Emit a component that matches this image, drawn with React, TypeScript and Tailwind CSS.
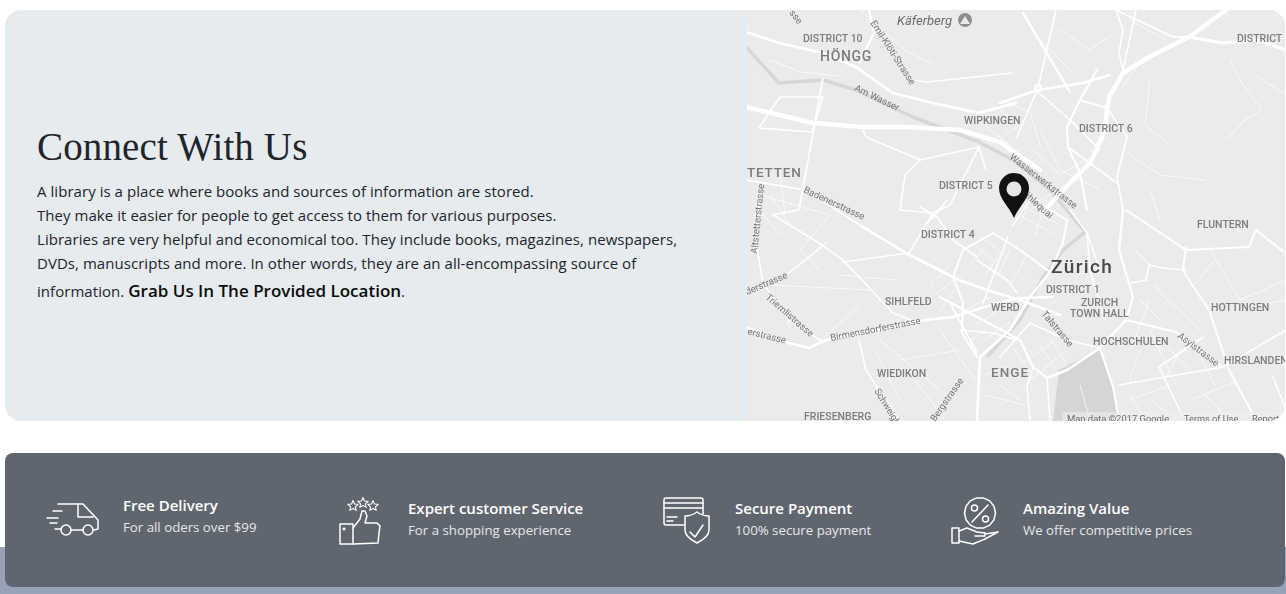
const ROADS_WIDE: [string, number][] = [
  ["M746 107 L813 123 L863 127 L906 127 L960 130 L1000 142 L1040 170", 4.5],
  ["M1226 10 L1189 37 L1149 57 L1123 73 L1109 97 L1104 133 L1090 163 L1063 190 L1045 210", 4.5],
  ["M1189 37 L1223 43 L1256 40 L1286 50", 3],
  ["M746 32 L779 43 L823 53 L856 67 L893 93 L933 103 L979 113 L1016 103", 2.6],
  ["M1000 103 L1038 90 L1083 83 L1110 75", 2.6],
  ["M869 10 L874 33 L859 63", 2.2],
  ["M863 227 L906 253 L959 280 L987 290 L1020 300 L1060 315", 2.6],
  ["M746 327 L789 343 L809 348 L826 340 L926 320 L953 317 L997 303 L1020 298 L1053 297", 2.4],
  ["M1023 13 L1049 57 L1070 92", 2.4],
  ["M1186 247 L1183 270 L1189 280 L1209 310 L1229 370 L1249 407 L1256 420", 2],
  ["M1126 210 L1186 250 L1249 247 L1256 230 L1285 253", 2],
  ["M1123 210 L1119 250 L1133 297 L1126 320 L1100 348", 2.2],
  ["M1126 320 L1176 332 L1223 367 L1286 330", 1.8],
  ["M1100 348 L1113 387 L1119 420", 2],
  ["M1047 378 L1067 370 L1100 348", 2.6],
  ["M1050 272 L1030 297 L1010 330 L980 357 L977 420", 2.6],
  ["M993 233 L963 250 L953 277 L963 303 L962 333 L977 357", 2],
  ["M993 233 L1020 250 L1050 272 L1063 243 L1067 220 L1045 207", 2],
  ["M940 297 L1020 340 L1033 367 L1047 378", 2.2],
  ["M1097 70 L1080 100 L1067 127 L1068 147 L1080 173 L1087 210", 2.2],
  ["M1080 100 L1107 108", 2],
];
const ROADS_MID: string[] = [
  "M913 80 L926 82 L946 80 L1012 73",
  "M823 78 L799 210 L773 215 L819 243 L843 260 L893 313 L919 323",
  "M780 97 L823 97 L812 132 L759 128 L780 97",
  "M863 130 L866 137 L920 160 L979 147 L986 170",
  "M920 160 L905 175 L900 210 L933 213",
  "M979 147 L950 205 L933 213 L909 253",
  "M843 262 L909 253",
  "M1056 10 L1038 88 L1017 137",
  "M1038 92 L1070 120 L1100 150",
  "M1116 10 L1123 30 L1119 53 L1123 70",
  "M1136 10 L1129 43 L1123 70",
  "M1116 10 L1173 37 L1189 37",
  "M1107 108 L1127 137 L1117 177 L1123 210",
  "M1068 147 L1117 183",
  "M756 243 L763 283 L789 320 L823 342",
  "M826 243 L789 273",
  "M859 340 L866 370 L879 390 L899 420",
  "M1131 283 L1146 280 L1149 265 L1163 268 L1186 270",
  "M1159 367 L1203 337",
  "M1159 367 L1183 417",
  "M1119 385 L1223 367",
  "M1273 377 L1286 410",
  "M746 180 L805 190 L863 227",
  "M760 195 L756 243",
  "M1008 237 L983 303",
  "M977 260 L1007 280 L1017 293",
  "M1033 367 L1027 387 L1030 420",
  "M1047 378 L1050 420",
  "M1000 357 L1030 323 L1067 340 L1100 348",
  "M920 207 L937 217 L953 240 L977 257",
  "M935 215 L920 230",
  "M935 215 L947 200",
  "M1013 225 L1030 200",
  "M960 330 L993 333 L1017 340",
  "M950 303 L977 353",
  "M1070 210 L1087 233 L1090 270 L1105 320",
  "M1087 233 L1100 270",
];
const STREETS: string[] = [
  "M860 10 L905 50 L935 65", "M770 60 L800 72 L840 76", "M1001 100 L1030 112 L1040 145",
  "M1060 30 L1090 50 L1110 36", "M1040 40 L1070 70", "M1130 20 L1165 40", "M1142 60 L1120 90",
  "M1150 78 L1145 125 L1170 145", "M1230 60 L1240 80 L1262 110 L1245 120 L1225 140",
  "M1255 75 L1286 95", "M1033 150 L1060 175 L1085 160", "M1040 130 L1060 170 L1100 190",
  "M1130 155 L1160 175 L1205 180", "M1150 190 L1160 220", "M1040 200 L1086 175",
  "M780 170 L785 215", "M760 195 L830 215", "M830 215 L800 250 L820 270", "M840 275 L895 280",
  "M770 285 L870 290", "M860 305 L815 345", "M780 300 L790 330", "M880 340 L940 390",
  "M900 360 L960 350", "M875 350 L900 400", "M915 380 L945 420", "M940 330 L975 380",
  "M1150 300 L1130 350", "M1170 300 L1200 330", "M1160 340 L1190 370", "M1210 250 L1240 300 L1286 280",
  "M1240 310 L1286 300", "M1190 400 L1240 380", "M1130 400 L1170 385", "M1150 330 L1176 385",
  "M1190 290 L1215 260", "M1020 365 L1055 340", "M1030 380 L1065 352", "M1040 345 L1055 368",
  "M1052 340 L1065 362", "M1015 350 L1030 372", "M975 245 L995 262", "M985 240 L1005 255",
  "M970 265 L983 250", "M985 275 L1000 255", "M1025 258 L1010 285", "M1010 250 L998 275",
  "M935 295 L960 275", "M940 310 L955 290", "M930 285 L950 265", "M965 310 L990 297",
  "M975 325 L1000 310", "M985 340 L1010 322", "M965 345 L985 330", "M1000 385 L1020 400",
  "M985 395 L1025 405", "M985 375 L1010 365", "M1020 205 L1060 225", "M1020 215 L1055 235",
  "M1030 200 L1020 225", "M1045 205 L1035 235",
  "M1000 110 L1020 125 L1005 135", "M985 125 L1010 145", "M770 195 L790 225", "M755 205 L780 235",
  "M1140 350 L1130 380", "M1180 350 L1165 380", "M1200 355 L1215 385", "M1135 335 L1165 350",
  "M1080 385 L1090 420", "M1130 395 L1145 420", "M1150 400 L1170 415", "M1205 395 L1225 415",
  "M1135 250 L1150 265", "M1155 285 L1175 310", "M1140 300 L1160 320",
];

const MapLabel = ({ x, y, t, s = 10.5, c = "#7c7c7c", r = 0, w = 500, ls = 0, i = false }: { x: number; y: number; t: string; s?: number; c?: string; r?: number; w?: number; ls?: number; i?: boolean }) => (
  <text
    x={x}
    y={y}
    fontSize={s}
    fill={c}
    fontWeight={w}
    letterSpacing={ls}
    fontStyle={i ? "italic" : "normal"}
    transform={r ? `rotate(${r} ${x} ${y})` : undefined}
  >
    {t}
  </text>
);

function ZurichMap() {
  return (
    <svg viewBox="747 10 538 411" className="block h-full w-full font-['Roboto',sans-serif]">
      <rect x="747" y="10" width="538" height="411" fill="#ebebec" />
      <g className="blur-[0.45px]">
        <path d="M1053 421 L1059 370 L1099 350 L1113 387 L1119 421 Z" fill="#d6d5d6" />
        <path d="M746 47 L779 83 L823 80 L856 90 L913 117 L979 142 L1013 160 L1050 190 L1085 232 L1063 250 L1043 277 L1020 320 L987 357" fill="none" stroke="#d8d7d7" strokeWidth="3.5" strokeLinejoin="round" />
        <g fill="none" stroke="#ffffff" strokeLinejoin="round" strokeLinecap="round">
          <g strokeWidth="0.9" opacity="0.8">
            {STREETS.map((d) => (
              <path key={d} d={d} />
            ))}
          </g>
          <g strokeWidth="1.6">
            {ROADS_MID.map((d) => (
              <path key={d} d={d} />
            ))}
          </g>
          {ROADS_WIDE.map(([d, w]) => (
            <path key={d} d={d} strokeWidth={w} />
          ))}
          <circle cx="1038" cy="88" r="3" strokeWidth="2" />
        </g>
        <MapLabel x={897} y={25} t="Käferberg" s={13} c="#6c6c6c" w={400} i />
        <circle cx="965" cy="20" r="7" fill="#8d8d8d" />
        <path d="M960 24 L965 16 L970 24 Z" fill="#e9e9ea" />
        <MapLabel x={803} y={42} t="DISTRICT 10" />
        <MapLabel x={820} y={61} t="HÖNGG" s={14} ls={0.7} />
        <MapLabel x={870} y={23} t="Emil-Klöti-Strasse" s={9.5} c="#757575" r={57} w={400} />
        <MapLabel x={789} y={13} t="sse" s={9.5} c="#757575" r={52} w={400} />
        <MapLabel x={854} y={90} t="Am Wasser" s={9.5} c="#757575" r={26} w={400} />
        <MapLabel x={964} y={124} t="WIPKINGEN" />
        <MapLabel x={1079} y={132} t="DISTRICT 6" />
        <MapLabel x={1237} y={42} t="DISTRICT" />
        <MapLabel x={747} y={177} t="TETTEN" s={13.5} ls={0.8} />
        <MapLabel x={803} y={192} t="Badenerstrasse" s={9.5} c="#757575" r={25} w={400} />
        <MapLabel x={939} y={189} t="DISTRICT 5" />
        <MapLabel x={1009} y={158} t="Wasserwerkstrasse" s={9.5} c="#757575" r={38} w={400} />
        <MapLabel x={1004} y={178} t="Neumühlequai" s={9.5} c="#757575" r={42} w={400} />
        <MapLabel x={921} y={238} t="DISTRICT 4" />
        <MapLabel x={1197} y={228} t="FLUNTERN" />
        <MapLabel x={1051} y={273} t="Zürich" s={19} c="#484848" ls={1.4} />
        <MapLabel x={1046} y={293} t="DISTRICT 1" />
        <MapLabel x={1081} y={306} t="ZURICH" />
        <MapLabel x={1070} y={317} t="TOWN HALL" />
        <MapLabel x={885} y={305} t="SIHLFELD" />
        <MapLabel x={991} y={311} t="WERD" />
        <MapLabel x={1211} y={311} t="HOTTINGEN" />
        <MapLabel x={1041} y={314} t="Talstrasse" s={9.5} c="#757575" r={50} w={400} />
        <MapLabel x={1093} y={345} t="HOCHSCHULEN" />
        <MapLabel x={1177} y={337} t="Asylstrasse" s={9.5} c="#757575" r={37} w={400} />
        <MapLabel x={1224} y={364} t="HIRSLANDEN" />
        <MapLabel x={877} y={377} t="WIEDIKON" />
        <MapLabel x={991} y={377} t="ENGE" s={13.5} ls={1} />
        <MapLabel x={804} y={420} t="FRIESENBERG" />
        <MapLabel x={874} y={391} t="Schweighof" s={9.5} c="#757575" r={58} w={400} />
        <MapLabel x={935} y={422} t="Bergstrasse" s={9.5} c="#757575" r={-55} w={400} />
        <MapLabel x={831} y={341} t="Birmensdorferstrasse" s={9.5} c="#757575" r={-11} w={400} />
        <MapLabel x={765} y={298} t="Triemlistrasse" s={9.5} c="#757575" r={41} w={400} />
        <MapLabel x={747} y={334} t="erstrasse" s={9.5} c="#757575" r={14} w={400} />
        <MapLabel x={747} y={295} t="derstrasse" s={9.5} c="#757575" r={-23} w={400} />
        <MapLabel x={757} y={254} t="Altstetterstrasse" s={9.5} c="#757575" r={-84} w={400} />
        <rect x="1062" y="412" width="223" height="9" fill="#efefef" opacity="0.6" />
        <MapLabel x={1067} y={421.5} t="Map data ©2017 Google" s={9.4} c="#6a6a6a" w={400} />
        <MapLabel x={1184} y={421.5} t="Terms of Use" s={9.2} c="#6a6a6a" w={400} />
        <MapLabel x={1252} y={421.5} t="Report" s={9.2} c="#6a6a6a" w={400} />
      </g>
      <path
        d="M1014 218 C1009 206 999 199 999 188 A15 15 0 0 1 1029 188 C1029 199 1019 206 1014 218 Z"
        fill="#111214"
      />
      <circle cx="1014" cy="189" r="7.5" fill="#e6e6e6" />
    </svg>
  );
}

const star = (cx: number, cy: number, r: number) => {
  const p: string[] = [];
  for (let i = 0; i < 10; i++) {
    const a = -Math.PI / 2 + (i * Math.PI) / 5;
    const q = i % 2 ? r * 0.45 : r;
    p.push(`${(cx + q * Math.cos(a)).toFixed(1)},${(cy + q * Math.sin(a)).toFixed(1)}`);
  }
  return p.join(" ");
};

const scallop = (cx: number, cy: number, r: number, n: number) => {
  const p: string[] = [];
  for (let i = 0; i < n; i++) {
    const a = (i * 2 * Math.PI) / n;
    p.push(`${(cx + r * Math.cos(a)).toFixed(1)},${(cy + r * Math.sin(a)).toFixed(1)}`);
  }
  return p.join(" ");
};

const iconProps = { fill: "none", stroke: "#ffffff", strokeWidth: 1.5, strokeLinecap: "round", strokeLinejoin: "round" } as const;

const TruckIcon = () => (
  <svg viewBox="46 500 54 40" className="mt-1 h-10 w-[54px] shrink-0 self-start" {...iconProps}>
    <path d="M58 504 H83 L98 520 V529 L94 530" />
    <path d="M78 504 V517 H93" />
    <circle cx="66" cy="530" r="5" />
    <circle cx="88" cy="530" r="5" />
    <path d="M71 530 H83 M53 511 H62 M47 518 H58 M50 523 H57 M55 529 H61" />
  </svg>
);

const ThumbIcon = () => (
  <svg viewBox="339 495 43 50" className="h-[50px] w-[43px] shrink-0" {...iconProps}>
    <rect x="340" y="523" width="13" height="20" />
    <circle cx="344" cy="528" r="0.7" />
    <path d="M353 527 L360 518 L362 510 L365 510 L367 515 L365 522 L377 522 L380 525 L379 532 L378 542 L353 543" />
    <g strokeWidth={1.1}>
      <polygon points={star(353, 505, 5.5)} />
      <polygon points={star(363, 502, 5.5)} />
      <polygon points={star(373, 505, 5.5)} />
    </g>
  </svg>
);

const CardIcon = () => (
  <svg viewBox="663 497 49 48" className="h-12 w-[49px] shrink-0" {...iconProps}>
    <path d="M684 525 H666 A2 2 0 0 1 664 523 V500 A2 2 0 0 1 666 498 H701 A2 2 0 0 1 703 500 V514" />
    <path d="M664 503 H703 M664 508 H703 M667 517 H677 M667 521 H673" />
    <path d="M697 512 C693 515 689 516 685 516 V530 C685 536 691 540 697 543 C703 540 709 536 709 530 V516 C705 516 701 515 697 512 Z" />
    <path d="M690 532 L695 537 L703 525" />
  </svg>
);

const PercentIcon = () => (
  <svg viewBox="951 495 50 50" className="h-[50px] w-[50px] shrink-0" {...iconProps}>
    <polygon points={scallop(980, 512, 15.5, 14)} />
    <circle cx="974.5" cy="507" r="3" />
    <circle cx="985.5" cy="518" r="3" />
    <path d="M988 504 L972 521" />
    <rect x="952" y="527" width="7" height="15" />
    <path d="M959 530 L967 527 L977 531 L985 532 L985 535 L975 535 M985 533 L998 531 L985 538 L973 543 L959 540" />
  </svg>
);

const FEATURE_CLASS = "flex h-[50px] items-center text-[#e6e8ea]";
const TITLE_CLASS = "text-[15px] font-semibold leading-5 text-white";
const SUB_CLASS = "mt-[2px] text-[13.25px] leading-[21px]";

export default function App() {
  return (
    <div className="flex h-[594px] w-[1286px] flex-col overflow-hidden bg-white font-['Open_Sans','Noto_Sans',sans-serif]">
      <section className="mx-[5px] mt-2.5 flex h-[411px] w-[1280px] shrink-0 overflow-hidden rounded-2xl bg-[#e6ebef]">
        <div className="w-[742px] shrink-0 pl-8 pr-[50px] pt-[114px]">
          <h1 className="font-['Liberation_Serif',serif] text-[39px] leading-[46px] tracking-[0.13px] text-[#212529]">Connect With Us</h1>
          <p className="mt-[9px] text-[15px] leading-6 tracking-[0.05px] text-[#212529]">
            A library is a place where books and sources of information are stored.
            <br />
            They make it easier for people to get access to them for various purposes.
            <br />
            Libraries are very helpful and economical too. They include books, magazines, newspapers,
            <br />
            DVDs, manuscripts and more. In other words, they are an all-encompassing source of
            <br />
            information. <span className="text-[17px] font-semibold leading-[31px] tracking-normal text-[#0b0b0b]">Grab Us In The Provided Location</span>.
          </p>
        </div>
        <div className="h-full w-[538px]">
          <ZurichMap />
        </div>
      </section>

      <section className="relative z-10 mx-[5px] mt-8 -mb-10 flex h-[134px] w-[1280px] shrink-0 items-start rounded-lg bg-[#5f666f] pl-[41px] pt-[43px]">
        <div className={`${FEATURE_CLASS} w-[293px] gap-[23px]`}>
          <TruckIcon />
          <div className="-mt-[9px]">
            <h3 className={TITLE_CLASS}>Free Delivery</h3>
            <p className={SUB_CLASS}>For all oders over $99</p>
          </div>
        </div>
        <div className={`${FEATURE_CLASS} w-[324px] gap-[26px]`}>
          <ThumbIcon />
          <div className="-mt-[3px]">
            <h3 className={TITLE_CLASS}>Expert customer Service</h3>
            <p className={SUB_CLASS}>For a shopping experience</p>
          </div>
        </div>
        <div className={`${FEATURE_CLASS} w-[288px] gap-[23px]`}>
          <CardIcon />
          <div className="-mt-[3px]">
            <h3 className={TITLE_CLASS}>Secure Payment</h3>
            <p className={SUB_CLASS}>100% secure payment</p>
          </div>
        </div>
        <div className={`${FEATURE_CLASS} gap-[22px]`}>
          <PercentIcon />
          <div className="-mt-[3px]">
            <h3 className={TITLE_CLASS}>Amazing Value</h3>
            <p className={SUB_CLASS}>We offer competitive prices</p>
          </div>
        </div>
      </section>

      <div className="h-[47px] w-full shrink-0 bg-[#94a3b8]" />
    </div>
  );
}
